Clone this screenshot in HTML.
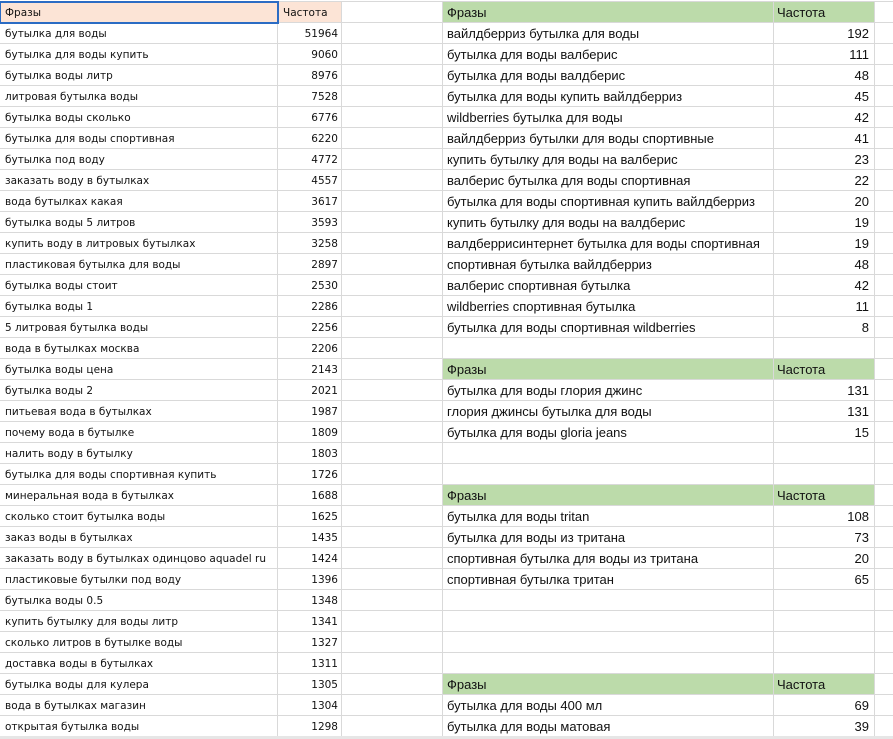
<!DOCTYPE html>
<html><head><meta charset="utf-8"><style>
body{margin:0;background:#fff;width:893px;height:739px;overflow:hidden;position:relative}
table{border-collapse:collapse;table-layout:fixed;position:absolute;left:-1px;top:1px;width:915px}
td{height:21px;box-sizing:border-box;border:1px solid #d9d9d9;padding:1px 4px 0;white-space:nowrap;overflow:hidden;font-family:"Liberation Sans",Arial,sans-serif;font-size:13px;color:#111;line-height:19px;vertical-align:middle}
td.a,td.b{font-family:"DejaVu Sans",sans-serif;font-size:10.5px;padding-left:5px;padding-top:2px;line-height:18px}
td.b,td.e{text-align:right}
td.b{padding-right:3px}
td.e{padding-right:5px}
td.g+td.g{padding-left:3px}
tr{height:21px}
.ph{background:#fce4d6}
.g{background:#bcdbaa}
.sel{outline:2px solid #2b6cc4;outline-offset:-1px}
.t{text-align:left!important}
</style></head><body>
<table>
<colgroup><col style="width:278px"><col style="width:64px"><col style="width:101px"><col style="width:331px"><col style="width:101px"><col style="width:40px"></colgroup>
<tr><td class="a ph sel">Фразы</td><td class="b ph t">Частота</td><td></td><td class="g">Фразы</td><td class="g">Частота</td><td></td></tr>
<tr><td class="a">бутылка для воды</td><td class="b">51964</td><td></td><td>вайлдберриз бутылка для воды</td><td class="e">192</td><td></td></tr>
<tr><td class="a">бутылка для воды купить</td><td class="b">9060</td><td></td><td>бутылка для воды валберис</td><td class="e">111</td><td></td></tr>
<tr><td class="a">бутылка воды литр</td><td class="b">8976</td><td></td><td>бутылка для воды валдберис</td><td class="e">48</td><td></td></tr>
<tr><td class="a">литровая бутылка воды</td><td class="b">7528</td><td></td><td>бутылка для воды купить вайлдберриз</td><td class="e">45</td><td></td></tr>
<tr><td class="a">бутылка воды сколько</td><td class="b">6776</td><td></td><td>wildberries бутылка для воды</td><td class="e">42</td><td></td></tr>
<tr><td class="a">бутылка для воды спортивная</td><td class="b">6220</td><td></td><td>вайлдберриз бутылки для воды спортивные</td><td class="e">41</td><td></td></tr>
<tr><td class="a">бутылка под воду</td><td class="b">4772</td><td></td><td>купить бутылку для воды на валберис</td><td class="e">23</td><td></td></tr>
<tr><td class="a">заказать воду в бутылках</td><td class="b">4557</td><td></td><td>валберис бутылка для воды спортивная</td><td class="e">22</td><td></td></tr>
<tr><td class="a">вода бутылках какая</td><td class="b">3617</td><td></td><td>бутылка для воды спортивная купить вайлдберриз</td><td class="e">20</td><td></td></tr>
<tr><td class="a">бутылка воды 5 литров</td><td class="b">3593</td><td></td><td>купить бутылку для воды на валдберис</td><td class="e">19</td><td></td></tr>
<tr><td class="a">купить воду в литровых бутылках</td><td class="b">3258</td><td></td><td>валдберрисинтернет бутылка для воды спортивная</td><td class="e">19</td><td></td></tr>
<tr><td class="a">пластиковая бутылка для воды</td><td class="b">2897</td><td></td><td>спортивная бутылка вайлдберриз</td><td class="e">48</td><td></td></tr>
<tr><td class="a">бутылка воды стоит</td><td class="b">2530</td><td></td><td>валберис спортивная бутылка</td><td class="e">42</td><td></td></tr>
<tr><td class="a">бутылка воды 1</td><td class="b">2286</td><td></td><td>wildberries спортивная бутылка</td><td class="e">11</td><td></td></tr>
<tr><td class="a">5 литровая бутылка воды</td><td class="b">2256</td><td></td><td>бутылка для воды спортивная wildberries</td><td class="e">8</td><td></td></tr>
<tr><td class="a">вода в бутылках москва</td><td class="b">2206</td><td></td><td></td><td></td><td></td></tr>
<tr><td class="a">бутылка воды цена</td><td class="b">2143</td><td></td><td class="g">Фразы</td><td class="g">Частота</td><td></td></tr>
<tr><td class="a">бутылка воды 2</td><td class="b">2021</td><td></td><td>бутылка для воды глория джинс</td><td class="e">131</td><td></td></tr>
<tr><td class="a">питьевая вода в бутылках</td><td class="b">1987</td><td></td><td>глория джинсы бутылка для воды</td><td class="e">131</td><td></td></tr>
<tr><td class="a">почему вода в бутылке</td><td class="b">1809</td><td></td><td>бутылка для воды gloria jeans</td><td class="e">15</td><td></td></tr>
<tr><td class="a">налить воду в бутылку</td><td class="b">1803</td><td></td><td></td><td></td><td></td></tr>
<tr><td class="a">бутылка для воды спортивная купить</td><td class="b">1726</td><td></td><td></td><td></td><td></td></tr>
<tr><td class="a">минеральная вода в бутылках</td><td class="b">1688</td><td></td><td class="g">Фразы</td><td class="g">Частота</td><td></td></tr>
<tr><td class="a">сколько стоит бутылка воды</td><td class="b">1625</td><td></td><td>бутылка для воды tritan</td><td class="e">108</td><td></td></tr>
<tr><td class="a">заказ воды в бутылках</td><td class="b">1435</td><td></td><td>бутылка для воды из тритана</td><td class="e">73</td><td></td></tr>
<tr><td class="a">заказать воду в бутылках одинцово aquadel ru</td><td class="b">1424</td><td></td><td>спортивная бутылка для воды из тритана</td><td class="e">20</td><td></td></tr>
<tr><td class="a">пластиковые бутылки под воду</td><td class="b">1396</td><td></td><td>спортивная бутылка тритан</td><td class="e">65</td><td></td></tr>
<tr><td class="a">бутылка воды 0.5</td><td class="b">1348</td><td></td><td></td><td></td><td></td></tr>
<tr><td class="a">купить бутылку для воды литр</td><td class="b">1341</td><td></td><td></td><td></td><td></td></tr>
<tr><td class="a">сколько литров в бутылке воды</td><td class="b">1327</td><td></td><td></td><td></td><td></td></tr>
<tr><td class="a">доставка воды в бутылках</td><td class="b">1311</td><td></td><td></td><td></td><td></td></tr>
<tr><td class="a">бутылка воды для кулера</td><td class="b">1305</td><td></td><td class="g">Фразы</td><td class="g">Частота</td><td></td></tr>
<tr><td class="a">вода в бутылках магазин</td><td class="b">1304</td><td></td><td>бутылка для воды 400 мл</td><td class="e">69</td><td></td></tr>
<tr><td class="a">открытая бутылка воды</td><td class="b">1298</td><td></td><td>бутылка для воды матовая</td><td class="e">39</td><td></td></tr>
</table>
<div style="position:absolute;left:0;top:736px;width:893px;height:3px;background:#e6e6e6"></div>
</body></html>
